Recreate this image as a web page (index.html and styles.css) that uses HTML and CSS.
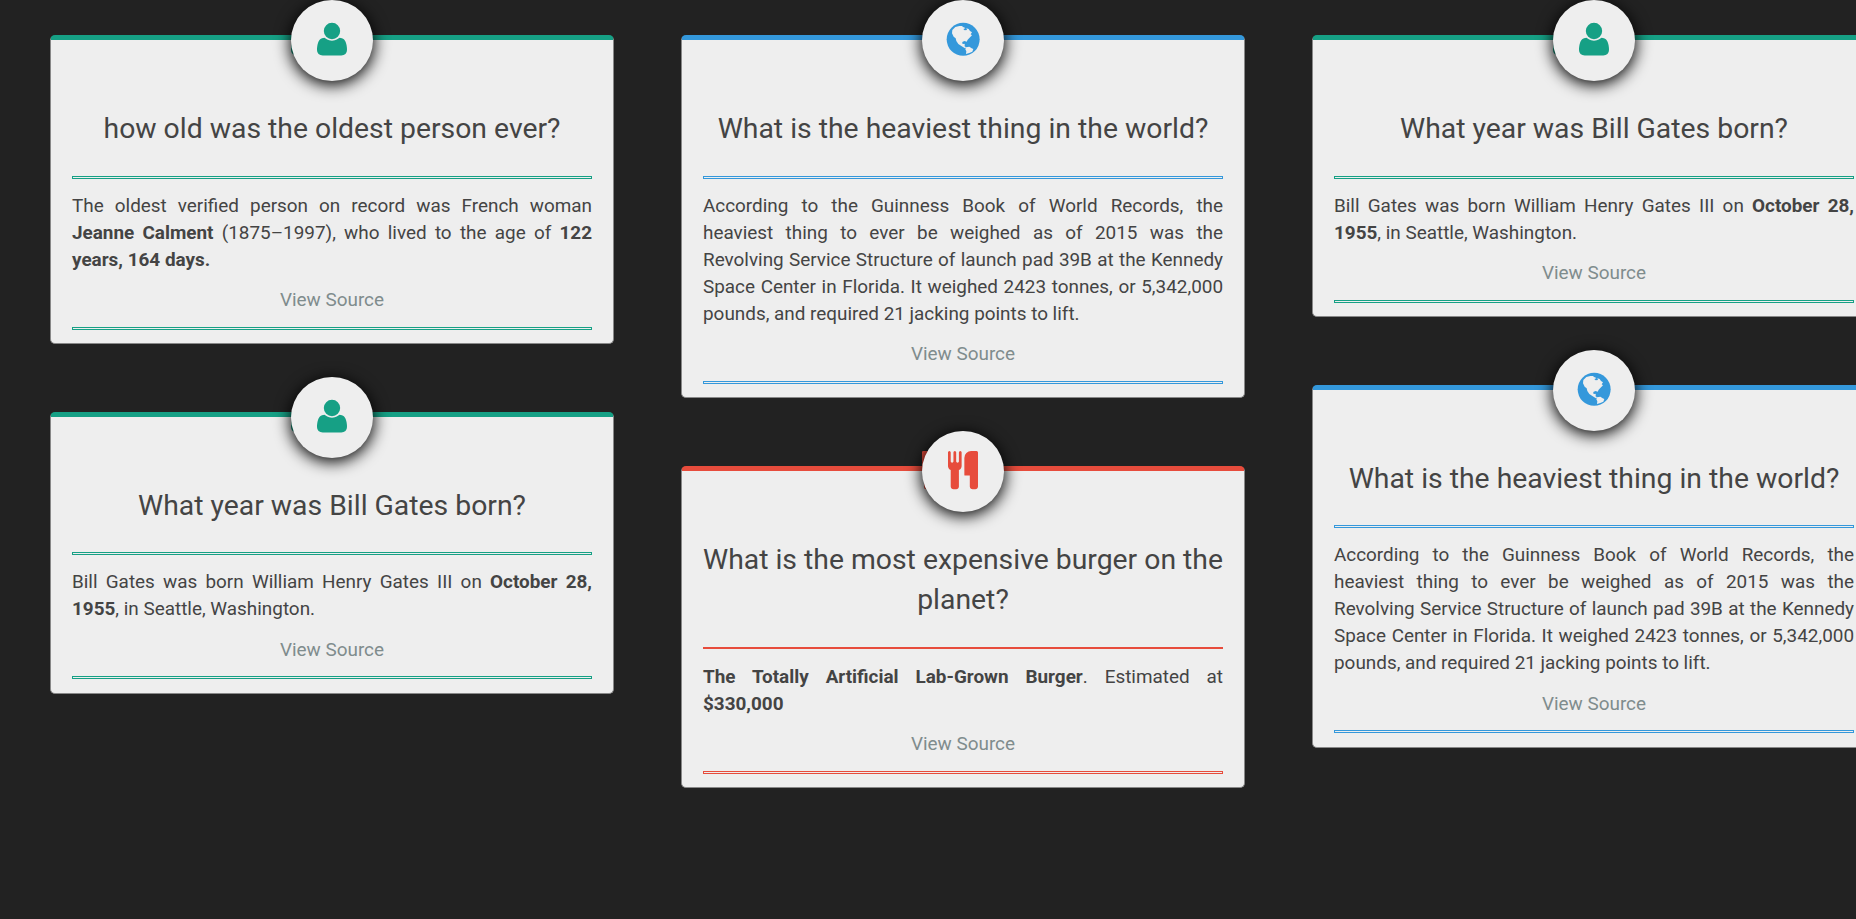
FILE: index.html
```html
<!DOCTYPE html>
<html lang="en">
<head>
<meta charset="utf-8">
<title>Questions</title>
<link rel="stylesheet" href="styles.css">
</head>
<body>
<svg class="defs" aria-hidden="true">
  <symbol id="user" viewBox="0 0 126 126">
    <path transform="translate(5.73 6.2) scale(.0639)" d="M1600 1405q0 120-73 189.500t-194 69.500h-874q-121 0-194-69.500t-73-189.500q0-53 3.500-103.500t14-109 26.500-108.500 43-97.500 62-81 85.500-53.500 111.500-20q9 0 42 21.500t74.500 48 108 48 133.500 21.500 133.500-21.500 108-48 74.500-48 42-21.500q61 0 111.500 20t85.500 53.500 62 81 43 97.500 26.500 108.500 14 109 3.500 103.500zm-320-893q0 159-112.500 271.500t-271.500 112.500-271.500-112.500-112.500-271.500 112.500-271.500 271.500-112.500 271.500 112.500 112.500 271.500z"/>
  </symbol>
  <symbol id="globe" viewBox="0 0 126 126">
    <circle cx="63.500" cy="64" r="49.500"/>
    <path class="land" d="M30 46 L31 36 L40 27 L52 24 L62 24 L61 27 L66 28 L70 31 L64 33 L68 37 L75 36 L73 31 L80 33 L84 39 L90 43 L86 49 L90 52 L82 60 L77 65 L74 71 L68 69 L62 71 L60 76 L64 78 L67 77 L69 81 L67 84 L72 88 L69 91 L58 84 L49 78 L43 69 L41 61 L35 56Z M72 88 L82 86 L89 91 L94 93 L91 101 L82 105 L72 108 L73 100 L70 94Z"/>
  </symbol>
  <symbol id="cutlery" viewBox="0 0 126 126">
    <path transform="translate(5.73 6.2) scale(.0639)" d="M832 64v640q0 61-35.500 111t-92.500 70v779q0 52-38 90t-90 38h-128q-52 0-90-38t-38-90v-779q-57-20-92.500-70t-35.500-111v-640q0-26 19-45t45-19 45 19 19 45v416q0 26 19 45t45 19 45-19 19-45v-416q0-26 19-45t45-19 45 19 19 45v416q0 26 19 45t45 19 45-19 19-45v-416q0-26 19-45t45-19 45 19 19 45zm768 0v1600q0 52-38 90t-90 38h-128q-52 0-90-38t-38-90v-512h-224q-13 0-22.500-9.500t-9.500-22.500v-800q0-132 94-226t226-94h256q26 0 45 19t19 45z"/>
  </symbol>
  <symbol id="cutlery-edge" viewBox="0 0 126 126">
    <path d="M18 10 Q18 6 22 6 H60 V121 H31 Q24 121 24 115 V64 Q18 62 18 55Z"/>
  </symbol>
</svg>
<main class="board">
  <div class="column">
    <article class="card green">
      <svg class="icon back"><use href="#user"/></svg>
      <div class="badge"><svg class="icon"><use href="#user"/></svg></div>
      <h2>how old was the oldest person ever?</h2>
      <hr>
      <p>The oldest verified person on record was French woman <b>Jeanne Calment</b> (1875–1997), who lived to the age of <b>122 years, 164 days.</b></p>
      <a class="source">View Source</a>
      <hr>
    </article>
    <article class="card green raised">
      <svg class="icon back"><use href="#user"/></svg>
      <div class="badge"><svg class="icon"><use href="#user"/></svg></div>
      <h2>What year was Bill Gates born?</h2>
      <hr>
      <p>Bill Gates was born William Henry Gates III on <b>October 28, 1955</b>, in Seattle, Washington.</p>
      <a class="source">View Source</a>
      <hr>
    </article>
  </div>
  <div class="column">
    <article class="card blue">
      <div class="badge"><svg class="icon"><use href="#globe"/></svg></div>
      <h2>What is the heaviest thing in the world?</h2>
      <hr>
      <p>According to the Guinness Book of World Records, the heaviest thing to ever be weighed as of 2015 was the Revolving Service Structure of launch pad 39B at the Kennedy Space Center in Florida. It weighed 2423 tonnes, or 5,342,000 pounds, and required 21 jacking points to lift.</p>
      <a class="source">View Source</a>
      <hr>
    </article>
    <article class="card red">
      <svg class="icon back"><use href="#cutlery-edge"/></svg>
      <div class="badge"><svg class="icon"><use href="#cutlery"/></svg></div>
      <h2>What is the most expensive burger on the planet?</h2>
      <hr class="thin">
      <p><b>The Totally Artificial Lab-Grown Burger</b>. Estimated at <b>$330,000</b></p>
      <a class="source">View Source</a>
      <hr>
    </article>
  </div>
  <div class="column">
    <article class="card green">
      <svg class="icon back"><use href="#user"/></svg>
      <div class="badge"><svg class="icon"><use href="#user"/></svg></div>
      <h2>What year was Bill Gates born?</h2>
      <hr>
      <p>Bill Gates was born William Henry Gates III on <b>October 28, 1955</b>, in Seattle, Washington.</p>
      <a class="source">View Source</a>
      <hr>
    </article>
    <article class="card blue raised">
      <div class="badge"><svg class="icon"><use href="#globe"/></svg></div>
      <h2>What is the heaviest thing in the world?</h2>
      <hr>
      <p>According to the Guinness Book of World Records, the heaviest thing to ever be weighed as of 2015 was the Revolving Service Structure of launch pad 39B at the Kennedy Space Center in Florida. It weighed 2423 tonnes, or 5,342,000 pounds, and required 21 jacking points to lift.</p>
      <a class="source">View Source</a>
      <hr>
    </article>
  </div>
</main>
</body>
</html>
```
FILE: styles.css
```css
* { box-sizing: border-box; }
body {
  margin: 0;
  height: 100vh;
  overflow: hidden;
  background: #222;
  color: #444;
  font: 18.9px/27px Roboto, sans-serif;
}
.defs { position: absolute; width: 0; height: 0; }
.board {
  display: flex;
  align-items: flex-start;
  gap: 67px;
  width: 1876px;
  padding: 35px 0 0 50px;
}
.column {
  flex: 0 0 564px;
  display: flex;
  flex-direction: column;
  gap: 68px;
}
.card {
  position: relative;
  padding: 60px 21px 13px;
  background: #eee;
  border: 1px solid #888;
  border-top: 5px solid var(--accent);
  border-radius: 5px;
}
.green { --accent: #16a085; }
.blue { --accent: #3498db; }
.red { --accent: #e74c3c; }
.badge {
  position: absolute;
  top: -40px;
  left: 240px;
  width: 82px;
  height: 81px;
  padding: 18px 20px;
  border-radius: 50%;
  background: #eee;
  box-shadow: 0 3px 16px 1px #000;
}
.icon {
  display: block;
  width: 42px;
  height: 42px;
  fill: var(--accent);
}
.back { position: absolute; top: -22px; left: 234px; }
.land { fill: #eee; }
h2 {
  margin: 9px 0 27px;
  font-size: 28.35px;
  font-weight: 400;
  line-height: 40px;
  text-align: center;
}
hr {
  height: 3px;
  margin: 0;
  border: 1px solid var(--accent);
}
.thin { height: 2px; margin-bottom: 14px; }
p { margin: 13px 0; text-align: justify; }
.source {
  display: block;
  margin-bottom: 14px;
  color: #7f8c8d;
  text-align: center;
}
.raised { padding-bottom: 14px; }
.raised h2 { margin-bottom: 26px; }
.raised p { margin-bottom: 14px; }
.raised .source { margin-bottom: 13px; }
```
